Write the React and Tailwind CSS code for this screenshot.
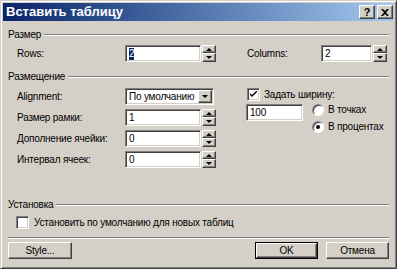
import React from 'react'

const raised = 'border border-t-white border-l-white border-b-[#404040] border-r-[#404040] shadow-[inset_-1px_-1px_0_#808080] bg-[#d4d0c8]'
const sunken = 'border border-t-[#808080] border-l-[#808080] border-b-white border-r-white shadow-[inset_1px_1px_0_#404040,inset_-1px_-1px_0_#d4d0c8] bg-white'

const UpArrow = () => (
  <span className="block w-0 h-0 border-l-[3px] border-r-[3px] border-b-[3px] border-l-transparent border-r-transparent border-b-black" />
)
const DownArrow = () => (
  <span className="block w-0 h-0 border-l-[3px] border-r-[3px] border-t-[3px] border-l-transparent border-r-transparent border-t-black" />
)

// Spin buttons next to an edit box
const Spinner = () => (
  <div className="flex flex-col w-[14px] h-[17px] shrink-0">
    <div className={`${raised} h-[8px] flex items-center justify-center`}><UpArrow /></div>
    <div className={`${raised} h-[9px] flex items-center justify-center`}><DownArrow /></div>
  </div>
)

const Edit = ({ value, width, selected }) => (
  <div className={`${sunken} h-[17px] flex items-center pl-[3px] shrink-0`} style={{ width }}>
    {selected ? (
      <span className="bg-[#0a246a] text-white leading-[12px]">{value}</span>
    ) : (
      <span className="leading-[12px]">{value}</span>
    )}
  </div>
)

const SpinEdit = ({ value, width = 76, selected }) => (
  <div className="flex gap-[1px]">
    <Edit value={value} width={width} selected={selected} />
    <Spinner />
  </div>
)

const GroupHeader = ({ title, className = '' }) => (
  <div className={`flex items-center h-[11px] ${className}`}>
    <span className="leading-[11px] pr-[3px] whitespace-nowrap">{title}</span>
    <div className="flex-1 h-[2px] border-t border-t-[#808080] border-b border-b-white" />
  </div>
)

const Field = ({ label, children }) => (
  <div className="flex items-center h-[17px]">
    <span className="w-[117px] pl-[9px] whitespace-nowrap shrink-0">{label}</span>
    {children}
  </div>
)

const Radio = ({ checked, label }) => (
  <div className="flex items-center h-[12px] gap-[4px] whitespace-nowrap">
    <div className="w-[12px] h-[12px] rounded-full border border-t-[#808080] border-l-[#808080] border-b-white border-r-white shadow-[inset_1px_1px_0_#404040] bg-white flex items-center justify-center shrink-0">
      {checked && <div className="w-[4px] h-[4px] rounded-full bg-black" />}
    </div>
    <span>{label}</span>
  </div>
)

const CheckBox = ({ checked }) => (
  <div className={`${sunken} w-[13px] h-[13px] flex items-center justify-center shrink-0`}>
    {checked && (
      <svg width="7" height="7" viewBox="0 0 7 7">
        <path d="M0 2 L0 4 L2 6 L7 1 L7 -1 L2 4 Z" fill="black" />
      </svg>
    )}
  </div>
)

const Button = ({ children, width, isDefault }) => (
  <div
    className={`${isDefault ? 'border border-black' : ''} h-[17px] flex`}
    style={{ width }}
  >
    <div className={`${raised} flex-1 flex items-center justify-center`}>{children}</div>
  </div>
)

export default function App() {
  return (
    <div
      className="w-[397px] h-[269px] bg-[#d4d0c8] text-black text-[10px] leading-[12px] tracking-[-0.2px] border border-t-[#d4d0c8] border-l-[#d4d0c8] border-b-[#404040] border-r-[#404040] shadow-[inset_1px_1px_0_#ffffff,inset_-1px_-1px_0_#808080] p-[2px] flex flex-col overflow-hidden"
      style={{ fontFamily: '"Liberation Sans", Arial, sans-serif' }}
    >
      {/* Title bar */}
      <div className="h-[18px] bg-gradient-to-r from-[#0a246a] to-[#a6caf0] flex items-center justify-between pl-[3px] pr-[1px] shrink-0">
        <span className="text-white font-bold text-[13px] leading-[16px] tracking-normal">Вставить таблицу</span>
        <div className="flex gap-[2px]">
          <div className={`${raised} w-[16px] h-[14px] flex items-center justify-center font-bold text-[11px] leading-[11px]`}>?</div>
          <div className={`${raised} w-[16px] h-[14px] flex items-center justify-center`}>
            <svg width="8" height="7" viewBox="0 0 8 7">
              <path d="M0 0 L2 0 L4 2 L6 0 L8 0 L5 3.5 L8 7 L6 7 L4 5 L2 7 L0 7 L3 3.5 Z" fill="black" />
            </svg>
          </div>
        </div>
      </div>

      <div className="px-[5px] flex flex-col">
        <GroupHeader title="Размер" className="mt-[8px]" />
        <div className="flex items-center h-[17px] mt-[5px]">
          <span className="w-[117px] pl-[9px] shrink-0">Rows:</span>
          <SpinEdit value="2" selected />
          <span className="w-[105px] pl-[31px] shrink-0">Columns:</span>
          <SpinEdit value="2" width={51} />
        </div>

        <GroupHeader title="Размещение" className="mt-[9px]" />
        <div className="flex mt-[6px]">
          <div className="flex flex-col gap-[4px] w-[238px] shrink-0">
            <Field label="Alignment:">
              <div className={`${sunken} w-[89px] h-[17px] flex items-center justify-between pl-[3px] pr-[1px] whitespace-nowrap`}>
                <span>По умолчанию</span>
                <div className={`${raised} w-[14px] h-[13px] flex items-center justify-center`}><DownArrow /></div>
              </div>
            </Field>
            <Field label="Размер рамки:">
              <SpinEdit value="1" />
            </Field>
            <Field label="Дополнение ячейки:">
              <SpinEdit value="0" />
            </Field>
            <Field label="Интервал ячеек:">
              <SpinEdit value="0" />
            </Field>
          </div>
          <div className="flex flex-col">
            <div className="flex items-center gap-[4px] h-[13px] pl-[1px] whitespace-nowrap">
              <CheckBox checked />
              <span>Задать ширину:</span>
            </div>
            <div className="flex mt-[3px]">
              <Edit value="100" width={57} />
              <div className="flex flex-col gap-[5px] ml-[9px]">
                <Radio label="В точках" />
                <Radio label="В процентах" checked />
              </div>
            </div>
          </div>
        </div>

        <GroupHeader title="Установка" className="mt-[31px]" />
        <div className="flex items-center gap-[5px] h-[13px] mt-[6px] pl-[8px] whitespace-nowrap">
          <CheckBox />
          <span>Установить по умолчанию для новых таблиц</span>
        </div>

        <div className="h-[2px] border-t border-t-[#808080] border-b border-b-white mt-[8px]" />

        <div className="flex items-center mt-[3px]">
          <Button width={64}>Style...</Button>
          <div className="flex-1" />
          <Button width={63} isDefault>OK</Button>
          <div className="w-[8px]" />
          <Button width={63}>Отмена</Button>
        </div>
      </div>
    </div>
  )
}
